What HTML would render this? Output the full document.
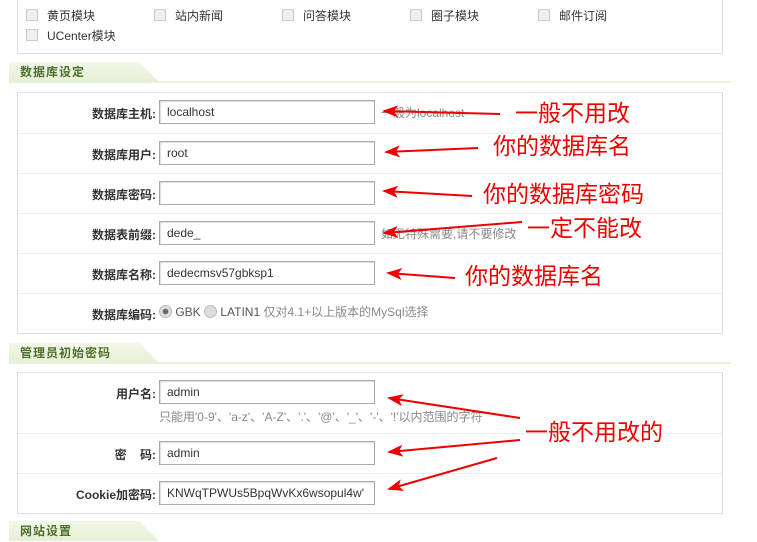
<!DOCTYPE html>
<html><head><meta charset="utf-8"><style>
body{margin:0;width:757px;height:530px;overflow:hidden;background:#fff;font-family:"Liberation Sans","Noto Sans CJK SC",sans-serif;font-size:12px;color:#333;position:relative}
.box{position:absolute;left:17px;width:704px;border:1px solid #ddd;border-top-color:#e3e3e3;background:#fff}
.hd{position:absolute;left:9px;height:20px;width:150px;background:linear-gradient(#f2f7e8,#e6f0d6);clip-path:polygon(0 0,130px 0,150px 100%,0 100%);color:#4d6f2b;font-weight:bold;font-size:12px;line-height:21px;padding-left:11px;letter-spacing:1px}
.hl{position:absolute;left:9px;width:722px;height:2px;background:#e8f0da}
.row{position:absolute;left:0;width:704px;border-top:1px solid #eee}
.lb{position:absolute;right:566px;font-weight:bold;color:#333;font-size:12px;white-space:nowrap}
.in{position:absolute;left:141px;width:207px;height:22px;border:1px solid #aaa;box-shadow:inset 1px 1px 1px #ddd;font-size:12px;line-height:22px;padding-left:7px;box-sizing:content-box;color:#333}
.tip{position:absolute;color:#888;font-size:12px;white-space:nowrap}
.cb{position:absolute;font-size:12px;color:#333}
.cb i{display:inline-block;width:10px;height:10px;border:1px solid #ccc;background:#eee;margin-right:9px;vertical-align:-1px}
.ann{position:absolute;color:#e00;font-size:23px;white-space:nowrap;font-family:"Noto Sans CJK SC",sans-serif}
</style></head><body>
<div class="box" style="top:-5px;height:57px">
 <span class="cb" style="left:8px;top:11px"><i></i>黄页模块</span>
 <span class="cb" style="left:136px;top:11px"><i></i>站内新闻</span>
 <span class="cb" style="left:264px;top:11px"><i></i>问答模块</span>
 <span class="cb" style="left:392px;top:11px"><i></i>圈子模块</span>
 <span class="cb" style="left:520px;top:11px"><i></i>邮件订阅</span>
 <span class="cb" style="left:8px;top:31px"><i></i>UCenter模块</span>
</div>
<div class="hd" style="top:62px">数据库设定</div><div class="hl" style="top:81px"></div>
<div class="box" style="top:92px;height:240px">
 <div class="row" style="top:0;border:0"><span class="lb" style="top:12px">数据库主机:</span><div class="in" style="top:7px">localhost</div><span class="tip" style="left:363px;top:11px">一般为localhost</span></div>
 <div class="row" style="top:40px"><span class="lb" style="top:12px">数据库用户:</span><div class="in" style="top:7px">root</div></div>
 <div class="row" style="top:80px"><span class="lb" style="top:12px">数据库密码:</span><div class="in" style="top:7px"></div></div>
 <div class="row" style="top:120px"><span class="lb" style="top:12px">数据表前缀:</span><div class="in" style="top:7px">dede_</div><span class="tip" style="left:363px;top:11px">如无特殊需要,请不要修改</span></div>
 <div class="row" style="top:160px"><span class="lb" style="top:12px">数据库名称:</span><div class="in" style="top:7px">dedecmsv57gbksp1</div></div>
 <div class="row" style="top:200px"><span class="lb" style="top:12px">数据库编码:</span><span class="tip" style="left:141px;top:9px;color:#555"><i style="display:inline-block;width:11px;height:11px;border-radius:50%;background:radial-gradient(#666 30%,#ddd 40%);border:1px solid #bbb;vertical-align:-2px"></i> GBK <i style="display:inline-block;width:11px;height:11px;border-radius:50%;background:#ddd;border:1px solid #bbb;vertical-align:-2px"></i> LATIN1 <span style="color:#888">仅对4.1+以上版本的MySql选择</span></span></div>
</div>
<div class="hd" style="top:343px">管理员初始密码</div><div class="hl" style="top:362px"></div>
<div class="box" style="top:372px;height:140px">
 <div class="row" style="top:0;border:0"><span class="lb" style="top:12px">用户名:</span><div class="in" style="top:7px">admin</div><span class="tip" style="left:141px;top:35px">只能用'0-9'、'a-z'、'A-Z'、'.'、'@'、'_'、'-'、'!'以内范围的字符</span></div>
 <div class="row" style="top:60px"><span class="lb" style="top:12px">密&nbsp;&nbsp;&nbsp;&nbsp;码:</span><div class="in" style="top:7px">admin</div></div>
 <div class="row" style="top:100px"><span class="lb" style="top:12px">Cookie加密码:</span><div class="in" style="top:7px;overflow:hidden;white-space:nowrap">KNWqTPWUs5BpqWvKx6wsopul4w'</div></div>
</div>
<div class="hd" style="top:521px">网站设置</div>
<span class="ann" style="left:515px;top:94px">一般不用改</span>
<span class="ann" style="left:493px;top:127px">你的数据库名</span>
<span class="ann" style="left:483px;top:175px">你的数据库密码</span>
<span class="ann" style="left:527px;top:209px">一定不能改</span>
<span class="ann" style="left:465px;top:257px">你的数据库名</span>
<span class="ann" style="left:525px;top:413px">一般不用改的</span>
<svg style="position:absolute;left:0;top:0" width="757" height="530">
<defs><marker id="a" markerWidth="16" markerHeight="12" refX="14" refY="6" orient="auto" markerUnits="userSpaceOnUse"><path d="M16,6 L0,0 L4,6 L0,12 Z" fill="#e00"/></marker></defs>
<g stroke="#e00" stroke-width="2" fill="none" marker-end="url(#a)">
<line x1="500" y1="114" x2="384" y2="111"/>
<line x1="478" y1="148" x2="386" y2="152"/>
<line x1="472" y1="196" x2="384" y2="191"/>
<line x1="522" y1="222" x2="384" y2="233"/>
<line x1="455" y1="278" x2="388" y2="273"/>
<line x1="520" y1="418" x2="389" y2="398"/>
<line x1="520" y1="440" x2="389" y2="452"/>
<line x1="497" y1="458" x2="389" y2="489"/>
</g></svg>
</body></html>
